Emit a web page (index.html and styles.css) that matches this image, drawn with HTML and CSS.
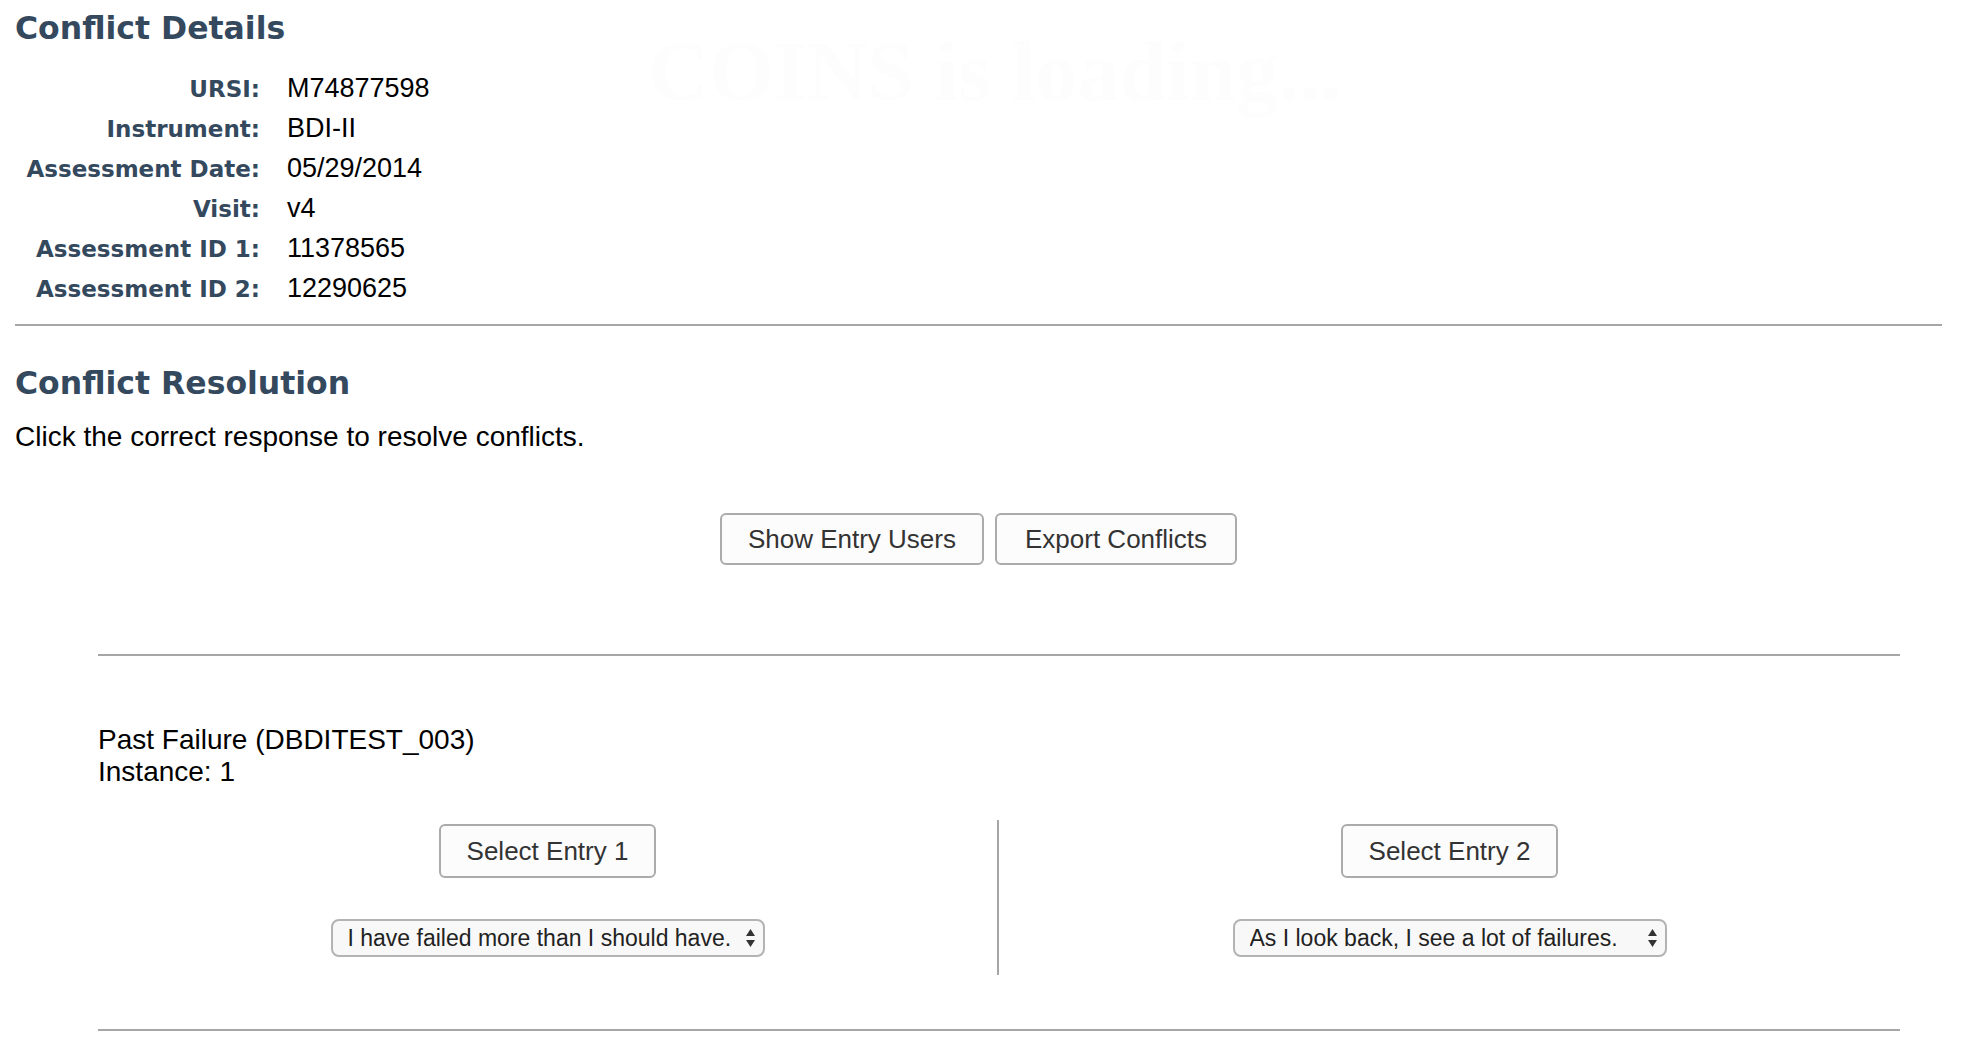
FILE: index.html
```html
<!DOCTYPE html>
<html lang="en">
<head>
<meta charset="utf-8">
<title>Conflict Details</title>
<link rel="stylesheet" href="styles.css">
</head>
<body>
<div class="page">
  <div class="loading-overlay">COINS is loading...</div>
  <h1 class="title">Conflict Details</h1>
  <dl class="details">
    <dt>URSI:</dt><dd>M74877598</dd>
    <dt>Instrument:</dt><dd>BDI-II</dd>
    <dt>Assessment Date:</dt><dd>05/29/2014</dd>
    <dt>Visit:</dt><dd>v4</dd>
    <dt>Assessment ID 1:</dt><dd>11378565</dd>
    <dt>Assessment ID 2:</dt><dd>12290625</dd>
  </dl>
  <hr class="rule">
  <h1 class="title title-res">Conflict Resolution</h1>
  <p class="intro">Click the correct response to resolve conflicts.</p>
  <div class="actions">
    <button class="btn">Show Entry Users</button>
    <button class="btn btn-export">Export Conflicts</button>
  </div>
  <section class="conflicts">
    <hr class="rule">
    <div class="item-head">Past Failure (DBDITEST_003)<br>Instance: 1</div>
    <div class="entries">
      <div class="entry">
        <button class="btn btn-entry">Select Entry 1</button>
        <span class="select-wrap">
          <select class="sel"><option>I have failed more than I should have.</option></select>
          <svg class="arrows" width="9" height="18" viewBox="0 0 9 18"><path d="M0 7 L4.5 0 L9 7 Z M0 11 L9 11 L4.5 18 Z" fill="#333"/></svg>
        </span>
      </div>
      <div class="entry entry-right">
        <button class="btn btn-entry">Select Entry 2</button>
        <span class="select-wrap">
          <select class="sel"><option>As I look back, I see a lot of failures.</option></select>
          <svg class="arrows" width="9" height="18" viewBox="0 0 9 18"><path d="M0 7 L4.5 0 L9 7 Z M0 11 L9 11 L4.5 18 Z" fill="#333"/></svg>
        </span>
      </div>
    </div>
    <hr class="rule rule-end">
  </section>
</div>
</body>
</html>
```

FILE: styles.css
```css
html, body {
  margin: 0;
  padding: 0;
  background: #ffffff;
}

body {
  font-family: "Liberation Sans", Arial, sans-serif;
  color: #000;
}

.page {
  position: relative;
  padding: 0 30px 0 15px;
}

.loading-overlay {
  position: absolute;
  left: 648px;
  top: 14px;
  font-family: "Liberation Serif", "Times New Roman", serif;
  font-weight: bold;
  font-size: 84px;
  line-height: 96px;
  color: #fdfdfd;
  white-space: nowrap;
  pointer-events: none;
}

.title {
  margin: 10px 0 0;
  font-family: "DejaVu Sans", Verdana, sans-serif;
  font-weight: bold;
  font-size: 31.5px;
  line-height: 36px;
  color: #34495e;
}

.title-res {
  margin-top: 39px;
}

.details {
  display: grid;
  grid-template-columns: 245px auto;
  column-gap: 27px;
  grid-auto-rows: 40px;
  align-items: baseline;
  margin: 22px 0 0;
}

.details dt {
  text-align: right;
  font-family: "DejaVu Sans", Verdana, sans-serif;
  font-weight: bold;
  font-size: 23px;
  line-height: 40px;
  color: #34495e;
}

.details dd {
  margin: 0;
  font-family: "Liberation Sans", Arial, sans-serif;
  font-size: 27px;
  line-height: 40px;
  color: #000;
}

.rule {
  margin: 16px 0 0;
  height: 0;
  border: none;
  border-top: 2px solid #a6a6a6;
}

.intro {
  margin: 20px 0 0;
  font-size: 28px;
  line-height: 32px;
}

.actions {
  display: flex;
  justify-content: center;
  gap: 11px;
  margin-top: 60px;
}

.btn {
  height: 52px;
  padding: 0 26px;
  font-family: "Liberation Sans", Arial, sans-serif;
  font-size: 26px;
  color: #333;
  background: #fcfcfc;
  border: 2px solid #ababab;
  border-radius: 6px;
}

.btn-export {
  padding: 0 28px;
}

.btn-entry {
  height: 54px;
  padding: 0 26px;
}

.conflicts {
  margin: 89px 42px 0 83px;
}

.conflicts .rule {
  margin-top: 0;
}

.item-head {
  margin-top: 68px;
  font-size: 28px;
  line-height: 32px;
}

.entries {
  display: grid;
  grid-template-columns: 899px 1fr;
  margin-top: 32px;
}

.entry {
  display: flex;
  flex-direction: column;
  align-items: center;
  gap: 41px;
  padding: 4px 0 18px;
}

.entry-right {
  border-left: 2px solid #a6a6a6;
}

.select-wrap {
  position: relative;
  display: block;
  width: 434px;
  height: 38px;
}

.sel {
  -webkit-appearance: none;
  appearance: none;
  box-sizing: border-box;
  width: 434px;
  height: 38px;
  margin: 0;
  padding: 0 30px 0 15px;
  font-family: "Liberation Sans", Arial, sans-serif;
  font-size: 23px;
  color: #222;
  background: #f8f8f8;
  border: 2px solid #b3b3b3;
  border-radius: 8px;
  outline: none;
}

.arrows {
  position: absolute;
  right: 10px;
  top: 10px;
  pointer-events: none;
}

.conflicts .rule-end {
  margin-top: 54px;
}
```
